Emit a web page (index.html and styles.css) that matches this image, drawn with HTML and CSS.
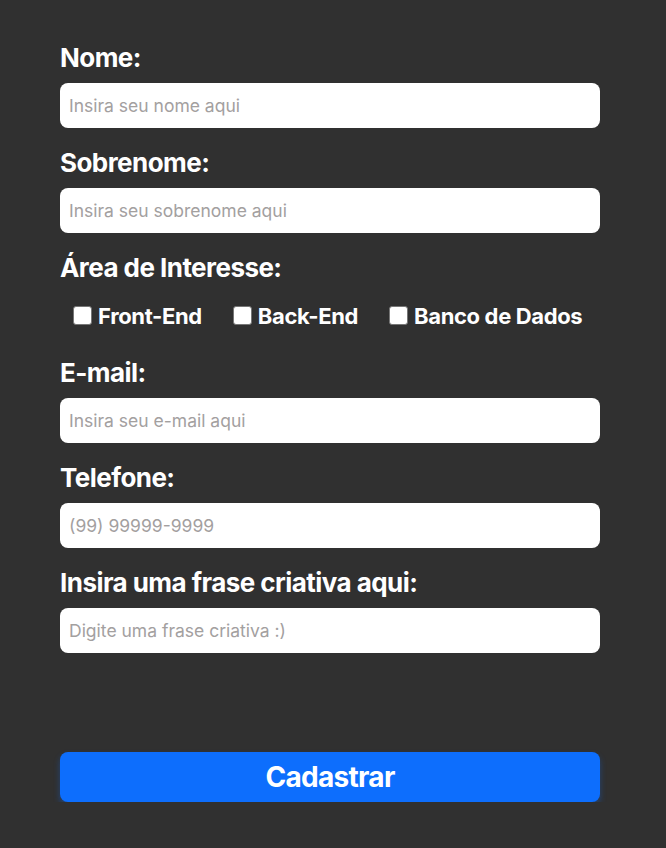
FILE: index.html
```html
<!DOCTYPE html>
<html lang="pt-BR">
<head>
<meta charset="utf-8">
<title>Cadastro</title>
<link rel="stylesheet" href="styles.css">
</head>
<body>
<form class="form">
  <div class="field">
    <label class="label" for="nome">Nome:</label>
    <input class="input" id="nome" type="text" placeholder="Insira seu nome aqui">
  </div>
  <div class="field">
    <label class="label" for="sobrenome">Sobrenome:</label>
    <input class="input" id="sobrenome" type="text" placeholder="Insira seu sobrenome aqui">
  </div>
  <div class="field">
    <span class="label">Área de Interesse:</span>
    <div class="checks">
      <label class="check"><input class="box" type="checkbox">Front-End</label>
      <label class="check"><input class="box" type="checkbox">Back-End</label>
      <label class="check"><input class="box" type="checkbox">Banco de Dados</label>
    </div>
  </div>
  <div class="field">
    <label class="label" for="email">E-mail:</label>
    <input class="input" id="email" type="email" placeholder="Insira seu e-mail aqui">
  </div>
  <div class="field">
    <label class="label" for="tel">Telefone:</label>
    <input class="input" id="tel" type="tel" placeholder="(99) 99999-9999">
  </div>
  <div class="field">
    <label class="label" for="frase">Insira uma frase criativa aqui:</label>
    <input class="input" id="frase" type="text" placeholder="Digite uma frase criativa :)">
  </div>
  <button class="submit" type="submit">Cadastrar</button>
</form>
</body>
</html>
```
FILE: styles.css
```css
html, body {
  margin: 0;
  padding: 0;
  background: #303030;
  font-family: Inter, "Noto Sans", sans-serif;
  color: #ffffff;
}

.form {
  width: 540px;
  margin: 0 0 0 60px;
  padding: 43px 0 0 0;
  display: flex;
  flex-direction: column;
}

.field {
  display: flex;
  flex-direction: column;
  margin-bottom: 20px;
}

.label {
  font-size: 26px;
  font-weight: 700;
  line-height: 29px;
  letter-spacing: -0.55px;
  margin-bottom: 11px;
}

.input {
  box-sizing: border-box;
  height: 45px;
  width: 100%;
  border: none;
  border-radius: 8px;
  background: #ffffff;
  padding: 0 9px;
  font-family: Inter, "Noto Sans", sans-serif;
  font-size: 17.5px;
  color: #333;
  outline: none;
}

.input::placeholder {
  color: #a3a09f;
}

.checks {
  display: flex;
  align-items: center;
  gap: 31px;
  padding-left: 13px;
  height: 45px;
}

.check {
  display: flex;
  align-items: center;
  gap: 6px;
  font-size: 22px;
  font-weight: 700;
  letter-spacing: -0.35px;
}

.box {
  appearance: none;
  -webkit-appearance: none;
  margin: 0;
  width: 19px;
  height: 19px;
  box-sizing: border-box;
  background: #ffffff;
  border: 1px solid #767676;
  border-radius: 3px;
}

.submit {
  margin-top: 79px;
  height: 50px;
  border: none;
  border-radius: 8px;
  background: #0d6efd;
  color: #ffffff;
  font-family: Inter, "Noto Sans", sans-serif;
  font-size: 28px;
  font-weight: 700;
  letter-spacing: -0.7px;
  box-shadow: 0 4px 6px rgba(13, 110, 253, 0.35);
  cursor: pointer;
}
```
